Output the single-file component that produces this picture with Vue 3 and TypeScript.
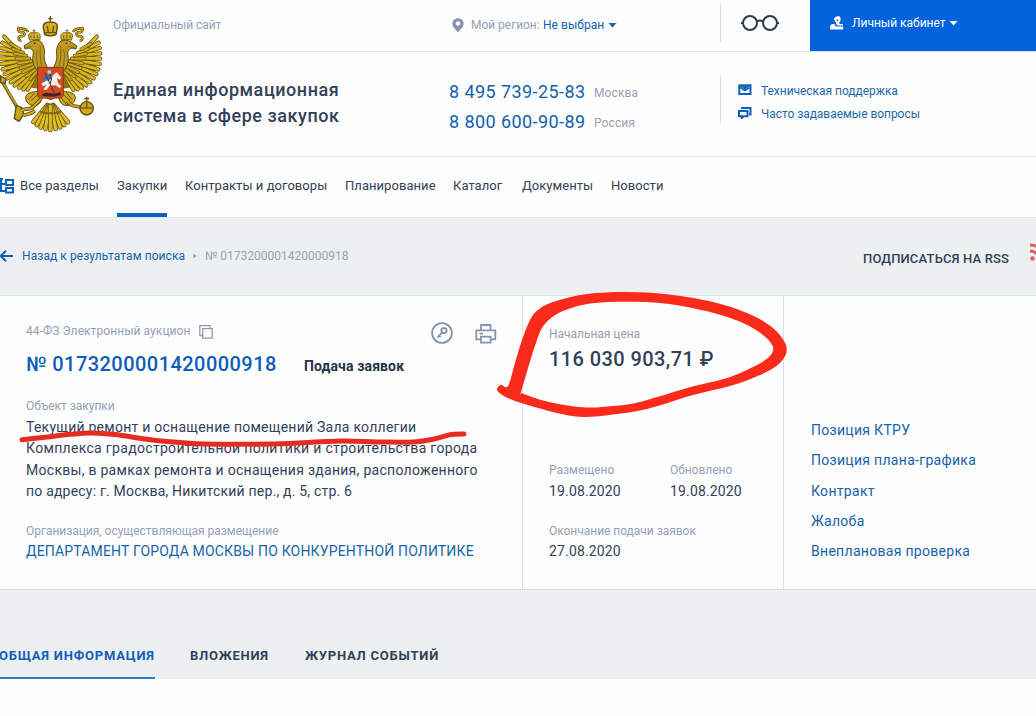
<script setup lang="ts">
type Point = [number, number]

const sections: { label: string; cls: string }[] = [
  { label: 'Закупки', cls: 'n1 active' },
  { label: 'Контракты и договоры', cls: 'n2' },
  { label: 'Планирование', cls: 'n3' },
  { label: 'Каталог', cls: 'n4' },
  { label: 'Документы', cls: 'n5' },
  { label: 'Новости', cls: 'n6' },
]

const related = ['Позиция КТРУ', 'Позиция плана-графика', 'Контракт', 'Жалоба', 'Внеплановая проверка']

const description = [
  'Текущий ремонт и оснащение помещений Зала коллегии',
  'Комплекса градостроительной политики и строительства города',
  'Москвы, в рамках ремонта и оснащения здания, расположенного',
  'по адресу: г. Москва, Никитский пер., д. 5, стр. 6',
]

// Wing feathers of the emblem: x1, y1, x2, y2
const feathers: number[][] = [
  [200, 232, 220, 269],
  [203, 228, 233, 268],
  [206, 222, 246, 263],
  [209, 215, 259, 256],
  [212, 208, 271, 247],
  [216, 202, 281, 235],
  [220, 195, 289, 222],
  [224, 188, 295, 208],
  [229, 181, 299, 192],
  [234, 174, 301, 176],
  [240, 167, 301, 160],
  [246, 159, 299, 144],
  [253, 150, 296, 128],
  [262, 140, 290, 110],
]
const coverts: number[][] = [
  [194, 216, 212, 238],
  [196, 208, 224, 229],
  [199, 199, 234, 217],
  [203, 191, 242, 204],
  [208, 183, 248, 190],
  [215, 175, 254, 176],
  [224, 167, 259, 161],
  [233, 158, 264, 147],
  [244, 147, 272, 131],
]
const tail: number[][] = [
  [142, 315, 100, 366],
  [160, 315, 204, 366],
  [144, 316, 110, 375],
  [159, 316, 193, 375],
  [146, 317, 122, 382],
  [157, 317, 181, 382],
  [149, 318, 136, 387],
  [154, 318, 167, 387],
  [151, 318, 151, 390],
]

// Closed or open Catmull-Rom curve through the points
function smooth(pts: Point[], closed: boolean): string {
  const n = pts.length
  const at = (i: number): Point => (closed ? pts[(i + n) % n] : pts[Math.max(0, Math.min(n - 1, i))])
  let d = `M${at(0).join(' ')}`
  for (let i = 0; i < (closed ? n : n - 1); i++) {
    const [a, b, c, e] = [at(i - 1), at(i), at(i + 1), at(i + 2)]
    d += `C${b[0] + (c[0] - a[0]) / 6} ${b[1] + (c[1] - a[1]) / 6} ${c[0] - (e[0] - b[0]) / 6} ${c[1] - (e[1] - b[1]) / 6} ${c[0]} ${c[1]}`
  }
  return closed ? d + 'Z' : d
}

const loopOuter = smooth([
  [508, 386], [515, 363], [522, 340], [530, 320], [538, 310], [553, 302], [587, 294], [627, 292], [667, 294.3], [713, 302],
  [747, 313], [773, 328], [786.5, 347], [780, 363], [760, 375], [730, 386], [693, 395], [647, 409], [613, 414.5],
  [583, 417], [557, 413], [523, 403.5], [510, 399], [500, 393.5], [497, 389], [501, 384.7],
], true)
const loopInner = smooth([
  [521, 393], [526, 375], [532, 355], [537, 340], [542, 328], [550, 319], [563, 311], [590, 303.5], [627, 301.7], [667, 303.7], [710, 312],
  [743, 323], [763, 335], [773, 347], [769, 357], [753, 367], [727, 378], [687, 388], [640, 402], [613, 406],
  [583, 407.3], [547, 401.5], [522.5, 393.5],
], true)
const loop = loopOuter + loopInner
const underline = smooth([
  [22, 439.7], [50, 436.7], [70, 434.3], [92, 433], [115, 434.6], [145, 439], [170, 441.8], [205, 444], [250, 444.2],
  [290, 443.4], [340, 441], [380, 442], [413, 442], [435, 438.8], [450, 434.8], [464, 434],
], false)
</script>

<template>
  <div class="page">
    <header class="header">
      <svg class="emblem" viewBox="0 0 360 420">
        <g v-for="side in ['', 'translate(303 0) scale(-1 1)']" :key="side" :transform="side">
          <path d="M160 270L165 195L222 172L280 118L290 210L220 262Z" fill="#8f7412" />
          <g v-for="(f, i) in feathers" :key="'f' + i" stroke-linecap="round">
            <line :x1="f[0]" :y1="f[1]" :x2="f[2]" :y2="f[3]" stroke="#66530f" stroke-width="13" />
            <line :x1="f[0]" :y1="f[1]" :x2="f[2]" :y2="f[3]" stroke="#d9b721" stroke-width="8.500" />
          </g>
          <g v-for="(f, i) in coverts" :key="'c' + i" stroke-linecap="round">
            <line :x1="f[0]" :y1="f[1]" :x2="f[2]" :y2="f[3]" stroke="#6e580f" stroke-width="11" />
            <line :x1="f[0]" :y1="f[1]" :x2="f[2]" :y2="f[3]" stroke="#cba922" stroke-width="6.500" />
          </g>
          <path d="M154 212C166 196 172 180 170 163C168 151 171 143 174 135C178 124 186 120 196 120C209 121 218 130 231 138L228 147L216 144C209 146 205 150 203 156C204 170 207 180 202 196L190 215Z" fill="#bd9a1f" stroke="#5f4c0c" stroke-width="3" />
          <path d="M182 138C184 156 182 178 178 198M191 148C195 166 193 182 189 200M206 139L226 144" fill="none" stroke="#7b6312" stroke-width="2.500" />
          <circle cx="199" cy="130" r="2.500" fill="#443707" />
          <path d="M184 120L182 108C184 97 194 97 200 99C209 95 218 101 218 108L214 121C204 117 194 117 184 120Z" fill="#d4b126" stroke="#66530f" stroke-width="2.500" />
          <path d="M201 100V88M197 92H205M191 106V115M201 104V114M210 106V115" stroke="#66500d" stroke-width="2.500" />
          <path d="M219 96C224 84 239 86 247 84C251 91 244 99 235 96C225 99 230 111 240 108C252 110 247 123 239 121" fill="none" stroke="#5e4b10" stroke-width="8" />
          <path d="M219 96C224 84 239 86 247 84C251 91 244 99 235 96C225 99 230 111 240 108C252 110 247 123 239 121" fill="none" stroke="#c7a425" stroke-width="4" />
          <path d="M189 274C208 276 225 278 226 293C226 309 211 319 194 316C178 311 180 295 171 290Z" fill="#cca91e" stroke="#5f4b0d" stroke-width="3" />
          <path d="M190 284L209 301M199 279L218 300M181 291L201 315" stroke="#745d10" stroke-width="3" />
        </g>
        <path d="M4 240L56 330" stroke="#5d4a0d" stroke-width="10" />
        <path d="M5 240L57 330" stroke="#c6a320" stroke-width="5" />
        <path d="M2 228L18 237L15 251L1 247ZM49 316L66 323L71 344L57 364L43 356L46 335Z" fill="#c6a320" stroke="#5d4a0d" stroke-width="4" />
        <path d="M64 332C75 323 86 332 99 321L120 300M203 303C213 321 226 317 247 323M70 346C82 340 90 346 105 332" fill="none" stroke="#5d4a0d" stroke-width="11" />
        <path d="M64 332C75 323 86 332 99 321L120 300M203 303C213 321 226 317 247 323M70 346C82 340 90 346 105 332" fill="none" stroke="#cfaa1e" stroke-width="6" />
        <g v-for="(f, i) in tail" :key="'t' + i" stroke-linecap="round">
          <line :x1="f[0]" :y1="f[1]" :x2="f[2]" :y2="f[3]" stroke="#6e5a12" stroke-width="14" />
          <line :x1="f[0]" :y1="f[1]" :x2="f[2]" :y2="f[3]" stroke="#dfbd25" stroke-width="9" />
        </g>
        <path d="M120 334C131 342 171 342 183 334" fill="none" stroke="#806616" stroke-width="6" />
        <circle cx="260" cy="325" r="20" fill="#cba920" stroke="#5d4a0d" stroke-width="4" />
        <path d="M241 324H280M260 305V290M253 296H268M260 308V323" stroke="#7c6211" stroke-width="5" />
        <path d="M134 104L130 82C128 68 141 65 151 67C162 65 174 69 172 83L168 104C158 108 144 108 134 104Z" fill="#d2ae23" stroke="#5c490d" stroke-width="4" />
        <path d="M151 67V48M145 56H158M142 78L145 98M161 78L158 98M135 98H168" stroke="#644f0d" stroke-width="4" />
        <path d="M113 202H190V282C190 293 183 294 175 294H164L152 299L139 294H126C116 294 113 291 113 282Z" fill="#d74822" stroke="#71430e" stroke-width="3" />
        <path d="M124 285C139 272 156 287 181 276L183 285C169 291 135 291 124 285Z" fill="#39261e" />
        <path d="M132 228L153 220L158 246L146 260L128 252Z" fill="#466c9c" />
        <path d="M150 241L160 225L170 217L177 224L184 233L179 239L171 234L174 249L184 258L179 265L167 256L149 257L139 271L130 268L140 254L129 259L124 251L138 242Z" fill="#f2eee8" />
        <circle cx="148" cy="216" r="6" fill="#b9c0ca" />
        <path d="M150 223L155 237L150 252M134 217L163 279" fill="none" stroke="#3a3940" stroke-width="3" />
      </svg>

      <div class="header-body">
        <div class="top">
          <span class="muted official">Официальный сайт</span>
          <div class="region">
            <svg class="pin" viewBox="0 0 12 15"><path d="M6 .2C2.8.2.4 2.5.4 5.6.4 9.4 3.2 11 6 14.4 8.8 11 11.600 9.400 11.600 5.600 11.600 2.500 9.200.2 6 .2ZM6 3.200A2.300 2.300 0 1 1 6 7.800 2.300 2.300 0 0 1 6 3.200Z" fill="#8894ad" fill-rule="evenodd" /></svg>
            <span class="muted region-label">Мой регион:</span>
            <span class="region-value">Не выбран</span>
            <i class="caret blue" />
          </div>
          <div class="vision">
            <svg viewBox="0 0 38 18" fill="none" stroke="#2d3b50" stroke-width="2"><circle cx="9" cy="9" r="7" /><circle cx="29" cy="9" r="7" /><path d="M15.500 7.500Q19 5.500 22.500 7.500M0 9H2M36 9H38" /></svg>
          </div>
          <div class="account">
            <svg viewBox="0 0 14 14"><path d="M4 2.500 6.500.300H9.500L10.500 2V5L9.300 6.500V8H13V9.500H7.500L6 8V6.500L4.500 4.500ZM1 8.500 4 7.800 5.500 9.500V10.500H13.200V13.500H0V10.500Z" fill="#fff" /><path d="M6.500 3.500H8.500L8 5H6.700Z" fill="#0063dc" /></svg>
            <span>Личный кабинет</span>
            <i class="caret white" />
          </div>
        </div>
        <div class="main">
          <div class="title">Единая информационная<br />система в сфере закупок</div>
          <div class="phones">
            <div><b>8 495 739-25-83</b><span class="muted">Москва</span></div>
            <div><b>8 800 600-90-89</b><span class="muted">Россия</span></div>
          </div>
          <div class="help">
            <div>
              <svg viewBox="0 0 14 12"><path d="M.300.300H13.500V11H.300Z" fill="#0f5fbd" /><path d="M2.300 2.300 7 5.600 11.500 2.300V3.300M2.300 2.300V9H11.500V4.500L7 7.600 2.300 4.500Z" fill="#fff" /><path d="M2.500 2.200 6.900 5.500 11.300 2.200Z" fill="#0f5fbd" /></svg>
              <span>Техническая поддержка</span>
            </div>
            <div>
              <svg viewBox="0 0 14 12" fill="none" stroke="#0f5fbd" stroke-width="2"><path d="M3 1H12.500V7.500H11M1 4H9.500V9.200H5.500L3.800 11V9.200H1Z" /></svg>
              <span>Часто задаваемые вопросы</span>
            </div>
          </div>
        </div>
      </div>
    </header>

    <nav class="nav">
      <svg class="tree" viewBox="0 0 14 16" fill="none" stroke="#0f5fbd" stroke-width="2"><path d="M1 0V13H6M1 6H6M0 1H3M6 2H13V7H6ZM6 10H13V14.500H6Z" /></svg>
      <span class="all">Все разделы</span>
      <span v-for="s in sections" :key="s.label" class="nav-item" :class="s.cls">{{ s.label }}</span>
    </nav>

    <div class="crumbs">
      <svg class="back" viewBox="0 0 14 12" fill="none" stroke="#0f5fbd" stroke-width="2"><path d="M13 6H1M6 .700.700 6 6 11.300" /></svg>
      <span class="back-text">Назад к результатам поиска</span>
      <svg class="chev" viewBox="0 0 4 6"><path d="M.500.500 3.500 3 .500 5.500Z" fill="#8b98b2" /></svg>
      <span class="crumb-no">№ 0173200001420000918</span>
      <span class="rss">ПОДПИСАТЬСЯ НА RSS</span>
      <svg class="rss-icon" viewBox="0 0 18 18" fill="none" stroke="#d8605c" stroke-width="3"><circle cx="2.500" cy="15.500" r="2.300" fill="#d8605c" stroke="none" /><path d="M0 8A10 10 0 0 1 10 18M0 2A16 16 0 0 1 16 18" /></svg>
    </div>

    <section class="card">
      <div class="col purchase">
        <div class="law muted">
          <span>44-ФЗ Электронный аукцион</span>
          <svg class="copy" viewBox="0 0 14 14" fill="none" stroke="#8f9bb0" stroke-width="1.300"><path d="M3.700 3.700H13.200V13.200H3.700ZM3 10.500H.800V.700H11V3" /></svg>
          <svg class="key" viewBox="0 0 22 22" fill="none" stroke="#8494ae"><circle cx="11" cy="11" r="9.900" stroke-width="1.800" /><circle cx="13" cy="8.600" r="2.600" stroke-width="1.900" /><path d="M11.200 10.600 6.300 15.400M7.700 13.500 9.500 15.300" stroke-width="1.900" /></svg>
          <svg class="printer" viewBox="0 0 22 20" fill="none" stroke="#8494ae" stroke-width="1.800"><path d="M6 6V1H15.500V6M5.500 15.300H1.300V6.300H20.300V15.300H16M5.900 12.700H15.600V18.700H5.900ZM4.500 9.700H8" /></svg>
        </div>
        <div class="number-row">
          <span class="number">№ 0173200001420000918</span>
          <span class="stage">Подача заявок</span>
        </div>
        <div class="muted object-label">Объект закупки</div>
        <div class="description"><div v-for="(line, i) in description" :key="i" :class="'d' + i">{{ line }}</div></div>
        <div class="muted org-label">Организация, осуществляющая размещение</div>
        <div class="org">ДЕПАРТАМЕНТ ГОРОДА МОСКВЫ ПО КОНКУРЕНТНОЙ ПОЛИТИКЕ</div>
      </div>
      <div class="col price-col">
        <div class="muted">Начальная цена</div>
        <div class="price">116 030 903,71 ₽</div>
        <div class="dates">
          <div><div class="muted">Размещено</div><div class="date">19.08.2020</div></div>
          <div><div class="muted">Обновлено</div><div class="date">19.08.2020</div></div>
          <div class="wide"><div class="muted">Окончание подачи заявок</div><div class="date">27.08.2020</div></div>
        </div>
      </div>
      <div class="col links">
        <span v-for="r in related" :key="r">{{ r }}</span>
      </div>
    </section>

    <div class="tabs">
      <span class="tab selected">ОБЩАЯ ИНФОРМАЦИЯ</span>
      <span class="tab t2">ВЛОЖЕНИЯ</span>
      <span class="tab t3">ЖУРНАЛ СОБЫТИЙ</span>
    </div>

    <svg class="marker" viewBox="0 0 1036 716">
      <path :d="loop" fill="#fb2b1b" fill-rule="evenodd" />
      <path :d="underline" fill="none" stroke="#e62c20" stroke-width="5" stroke-linecap="round" />
    </svg>
  </div>
</template>

<style>
body {
  margin: 0;
  overflow: hidden;
}
</style>

<style scoped>
.page {
  position: relative;
  width: 1036px;
  height: 716px;
  overflow: hidden;
  background: #fefefe;
  color: #334059;
  font-family: Roboto, "Liberation Sans", sans-serif;
  font-size: 14px;
  white-space: nowrap;
}
.page * {
  box-sizing: border-box;
}
svg {
  display: block;
  flex: none;
}
.muted {
  color: #94a0b4;
  font-size: 12px;
  line-height: 16px;
  letter-spacing: -0.03px;
}
.header {
  display: grid;
  grid-template-columns: 113px 1fr;
  height: 157px;
  border-bottom: 1px solid #dfe7ee;
}
.emblem {
  width: 120px;
  height: 140px;
}
.top {
  display: grid;
  grid-template-columns: 338px 269px 90px 1fr;
  height: 52px;
  background: linear-gradient(#d9e3ee, #d9e3ee) 7px 51px / 100% 1px no-repeat;
}
.official {
  padding-top: 17px;
  letter-spacing: -0.08px;
}
.region {
  display: flex;
  align-items: center;
  height: 50px;
  padding-left: 1px;
}
.pin {
  width: 12px;
  height: 15px;
  margin-right: 7px;
}
.region-label {
  width: 72px;
}
.region-value {
  width: 65px;
  color: #1260ad;
  font-size: 12px;
  letter-spacing: 0.05px;
}
.caret {
  width: 9px;
  height: 5px;
  clip-path: polygon(0 0, 100% 0, 50% 100%);
}
.blue {
  background: #1562b4;
}
.white {
  background: #fff;
}
.vision {
  height: 38px;
  margin-top: 4px;
  padding: 10px 0 0 20px;
  border-left: 1px solid #d9dfe7;
}
.vision svg {
  width: 38px;
  height: 18px;
}
.account {
  display: flex;
  align-items: center;
  height: 51px;
  padding: 0 0 5px 20px;
  background: #0063dc;
  color: #fff;
  font-size: 12px;
}
.account svg {
  width: 14px;
  height: 14px;
}
.account span {
  width: 97px;
  margin-left: 8px;
}
.main {
  display: grid;
  grid-template-columns: 336px 271px 1fr;
  padding-top: 24px;
}
.title {
  padding-top: 1px;
  font-size: 18px;
  font-weight: 500;
  line-height: 26px;
  letter-spacing: 0.55px;
}
.phones > div {
  display: flex;
  height: 30px;
  align-items: center;
}
.phones b {
  width: 145px;
  color: #1260ad;
  font-size: 18px;
  font-weight: 400;
  letter-spacing: 0.42px;
}
.phones .muted {
  padding-top: 3px;
  letter-spacing: 0.1px;
}
.help {
  height: 47px;
  padding: 3px 0 0 17px;
  border-left: 1px solid #d9dfe7;
}
.help > div {
  display: flex;
  align-items: center;
  height: 23px;
  gap: 9px;
  color: #2168a8;
  font-size: 12px;
  letter-spacing: -0.04px;
}
.help svg {
  width: 14px;
  height: 12px;
  margin-top: -1px;
}
.nav {
  display: flex;
  height: 60px;
  line-height: 57px;
  font-size: 13px;
  letter-spacing: 0.05px;
}
.tree {
  width: 14px;
  height: 16px;
  margin: 21px 6px 0 0;
}
.all {
  width: 97px;
}
.nav-item {
  height: 60px;
}
.n1 { width: 50px; margin-right: 18px; }
.n2 { width: 160px; }
.n3 { width: 108px; }
.n4 { width: 69px; }
.n5 { width: 89px; }
.active {
  border-bottom: 4px solid #1260bd;
}
.crumbs {
  display: flex;
  height: 78px;
  border-top: 1px solid #e3e8eb;
  background: #edf0f1;
  font-size: 12px;
  line-height: 77px;
}
.crumbs > * {
  flex: none;
}
.back {
  width: 14px;
  height: 12px;
  margin-top: 32px;
}
.back-text {
  width: 171px;
  margin-left: 8px;
  color: #1762ab;
  letter-spacing: 0.07px;
}
.chev {
  width: 4px;
  height: 6px;
  margin-top: 35px;
}
.crumb-no {
  width: 658px;
  margin-left: 8px;
  color: #97a2b8;
}
.rss {
  width: 167px;
  padding-top: 2px;
  font-size: 13px;
  font-weight: 500;
  letter-spacing: 0.15px;
}
.rss-icon {
  width: 18px;
  height: 18px;
  margin-top: 25px;
}
.card {
  display: grid;
  grid-template-columns: 522px 261px 1fr;
  height: 295px;
  border-top: 1px solid #d9e3e8;
  border-bottom: 1px solid #d3dde6;
}
.col + .col {
  border-left: 1px solid #dae2e9;
}
.purchase {
  padding: 27px 0 0 26px;
}
.law {
  display: flex;
  height: 16px;
  letter-spacing: 0.07px;
}
.law span {
  width: 173px;
}
.copy {
  width: 14px;
  height: 14px;
  margin-top: 2px;
}
.key {
  width: 22px;
  height: 22px;
  margin: -1px 0 0 218px;
}
.printer {
  width: 22px;
  height: 20px;
  margin: 1px 0 0 22px;
}
.number-row {
  display: flex;
  margin-top: 12px;
  line-height: 26px;
}
.number {
  width: 278px;
  color: #0d5dbb;
  font-size: 20px;
  font-weight: 500;
  letter-spacing: 0.45px;
}
.stage {
  padding-top: 2px;
  color: #263349;
  font-weight: 700;
  letter-spacing: 0.12px;
}
.object-label {
  margin-top: 19px;
}
.description {
  margin-top: 3px;
  line-height: 21.300px;
}
.d0 { letter-spacing: 0.25px; }
.d1 { letter-spacing: 0.32px; }
.d2 { letter-spacing: 0.28px; }
.d3 { letter-spacing: 0.2px; }
.org-label {
  margin-top: 21px;
}
.org {
  margin-top: 2px;
  color: #1663a9;
  line-height: 20px;
  letter-spacing: 0.17px;
}
.price-col {
  padding: 30px 0 0 26px;
}
.price {
  margin-top: 4px;
  font-size: 20px;
  font-weight: 500;
  line-height: 26px;
  letter-spacing: 0.42px;
}
.dates {
  display: grid;
  grid-template-columns: 121px 1fr;
  row-gap: 22px;
  margin-top: 90px;
}
.date {
  margin-top: 3px;
  line-height: 20px;
  letter-spacing: 0.15px;
}
.wide {
  grid-column: 1 / 3;
}
.wide .date {
  margin-top: 2px;
}
.links {
  display: flex;
  flex-direction: column;
  padding: 119px 0 0 27px;
  color: #1762ab;
  line-height: 30.250px;
  letter-spacing: 0.3px;
}
.tabs {
  display: flex;
  height: 89px;
  background: #edf0f1;
  font-size: 13px;
  font-weight: 700;
  line-height: 16px;
  letter-spacing: 0.78px;
}
.tab {
  height: 89px;
  padding-top: 58px;
}
.selected {
  width: 156px;
  margin-left: -1px;
  color: #1260b8;
  border-bottom: 2px solid #2f80c2;
}
.t2 {
  width: 115px;
  margin-left: 35px;
}
.marker {
  position: absolute;
  inset: 0;
  width: 1036px;
  height: 716px;
  pointer-events: none;
}
</style>
